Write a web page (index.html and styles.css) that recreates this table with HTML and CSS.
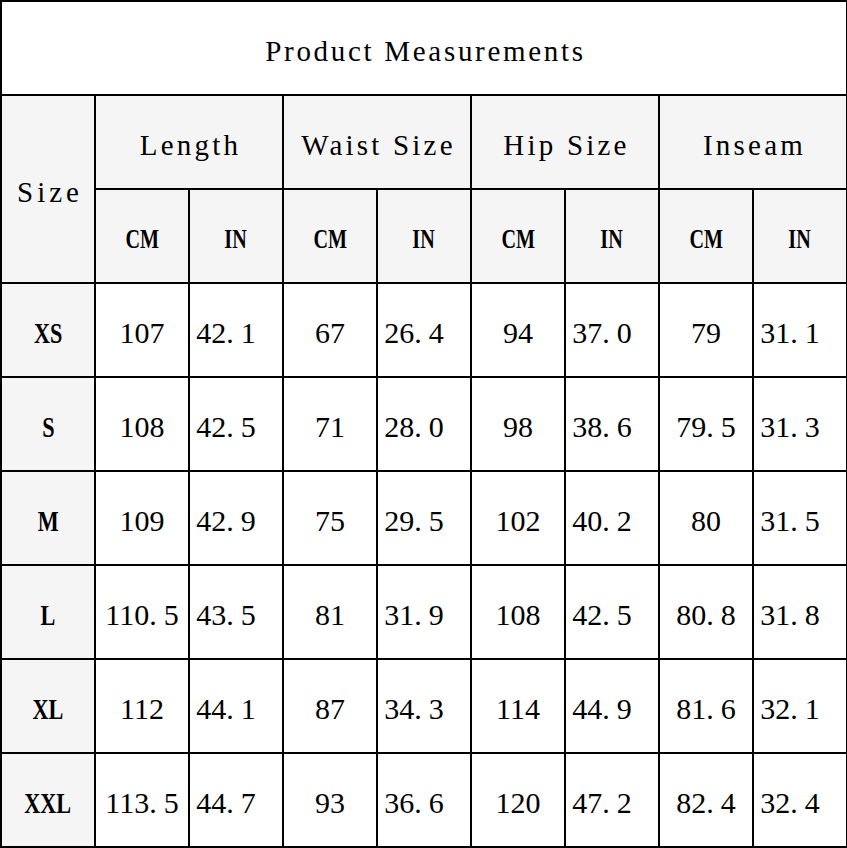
FILE: index.html
```html
<!DOCTYPE html>
<html lang="en">
<head>
<meta charset="utf-8">
<title>Product Measurements</title>
<link rel="stylesheet" href="styles.css">
</head>
<body>
<div class="chart">
  <div class="cell title">Product Measurements</div>

  <div class="cell head size-head">Size</div>
  <div class="cell head group">Length</div>
  <div class="cell head group">Waist Size</div>
  <div class="cell head group">Hip Size</div>
  <div class="cell head group">Inseam</div>

  <div class="cell head unit"><span>CM</span></div>
  <div class="cell head unit"><span>IN</span></div>
  <div class="cell head unit"><span>CM</span></div>
  <div class="cell head unit"><span>IN</span></div>
  <div class="cell head unit"><span>CM</span></div>
  <div class="cell head unit"><span>IN</span></div>
  <div class="cell head unit"><span>CM</span></div>
  <div class="cell head unit"><span>IN</span></div>

  <div class="cell label"><span>XS</span></div>
  <div class="cell cm">107</div><div class="cell in">42<span class="dp">.</span>1</div>
  <div class="cell cm">67</div><div class="cell in">26<span class="dp">.</span>4</div>
  <div class="cell cm">94</div><div class="cell in">37<span class="dp">.</span>0</div>
  <div class="cell cm">79</div><div class="cell in">31<span class="dp">.</span>1</div>

  <div class="cell label"><span>S</span></div>
  <div class="cell cm">108</div><div class="cell in">42<span class="dp">.</span>5</div>
  <div class="cell cm">71</div><div class="cell in">28<span class="dp">.</span>0</div>
  <div class="cell cm">98</div><div class="cell in">38<span class="dp">.</span>6</div>
  <div class="cell cm">79<span class="dp">.</span>5</div><div class="cell in">31<span class="dp">.</span>3</div>

  <div class="cell label"><span>M</span></div>
  <div class="cell cm">109</div><div class="cell in">42<span class="dp">.</span>9</div>
  <div class="cell cm">75</div><div class="cell in">29<span class="dp">.</span>5</div>
  <div class="cell cm">102</div><div class="cell in">40<span class="dp">.</span>2</div>
  <div class="cell cm">80</div><div class="cell in">31<span class="dp">.</span>5</div>

  <div class="cell label"><span>L</span></div>
  <div class="cell cm">110<span class="dp">.</span>5</div><div class="cell in">43<span class="dp">.</span>5</div>
  <div class="cell cm">81</div><div class="cell in">31<span class="dp">.</span>9</div>
  <div class="cell cm">108</div><div class="cell in">42<span class="dp">.</span>5</div>
  <div class="cell cm">80<span class="dp">.</span>8</div><div class="cell in">31<span class="dp">.</span>8</div>

  <div class="cell label"><span>XL</span></div>
  <div class="cell cm">112</div><div class="cell in">44<span class="dp">.</span>1</div>
  <div class="cell cm">87</div><div class="cell in">34<span class="dp">.</span>3</div>
  <div class="cell cm">114</div><div class="cell in">44<span class="dp">.</span>9</div>
  <div class="cell cm">81<span class="dp">.</span>6</div><div class="cell in">32<span class="dp">.</span>1</div>

  <div class="cell label"><span>XXL</span></div>
  <div class="cell cm">113<span class="dp">.</span>5</div><div class="cell in">44<span class="dp">.</span>7</div>
  <div class="cell cm">93</div><div class="cell in">36<span class="dp">.</span>6</div>
  <div class="cell cm">120</div><div class="cell in">47<span class="dp">.</span>2</div>
  <div class="cell cm">82<span class="dp">.</span>4</div><div class="cell in">32<span class="dp">.</span>4</div>
</div>
</body>
</html>
```

FILE: styles.css
```css
html, body {
  margin: 0;
  padding: 0;
  background: #ffffff;
}

body {
  font-family: "Liberation Serif", "Times New Roman", serif;
  color: #000000;
  overflow: hidden;
}

.chart {
  display: grid;
  grid-template-columns: repeat(9, 92px);
  grid-auto-rows: 92px;
  gap: 2px;
  padding: 2px 1px 2px 2px;
  width: 847px;
  box-sizing: border-box;
  background: #000000;
}

.cell {
  display: flex;
  align-items: center;
  justify-content: center;
  box-sizing: border-box;
  padding-top: 6px;
  background: #ffffff;
  font-size: 30px;
  white-space: nowrap;
}

.head,
.label {
  background: #f5f5f5;
}

.title {
  grid-column: 1 / -1;
  font-size: 29px;
  letter-spacing: 2.7px;
  padding-left: 3px;
}

.size-head {
  grid-row: span 2;
  font-size: 29px;
  letter-spacing: 4px;
  padding-left: 4px;
}

.group {
  grid-column: span 2;
  font-size: 29px;
  letter-spacing: 3.2px;
  padding-left: 3px;
}

.unit span {
  display: inline-block;
  font-size: 28px;
  font-weight: bold;
  transform: scaleX(0.72);
}

.label span {
  display: inline-block;
  font-size: 30px;
  font-weight: bold;
  transform: scaleX(0.74);
}

.dp {
  margin-right: 7px;
}

.in {
  padding-right: 20px;
}
```
